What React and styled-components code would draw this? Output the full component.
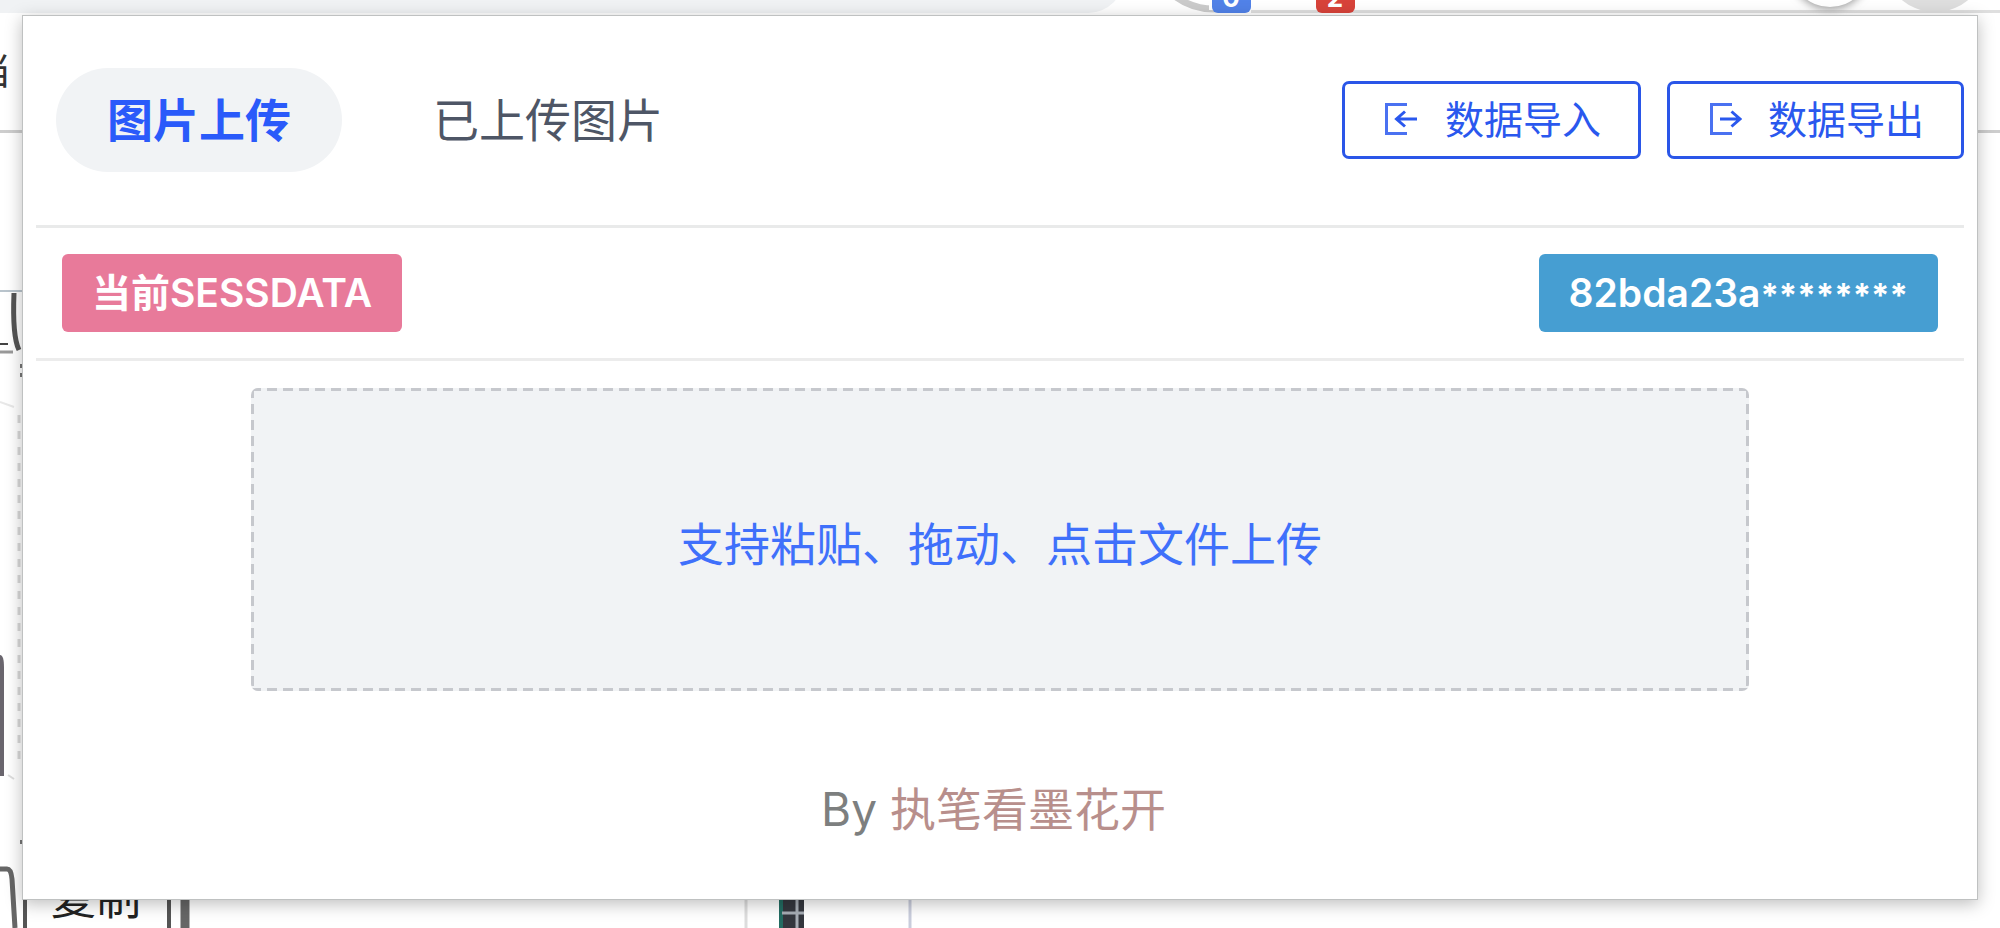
import React, { useState } from "react";
import styled, { createGlobalStyle } from "styled-components";

const GlobalStyle = createGlobalStyle`
  *, *::before, *::after { box-sizing: border-box; }
  body {
    margin: 0;
    background: #fff;
    font-family: Inter, "Noto Sans CJK SC", sans-serif;
  }
  button { font-family: inherit; cursor: pointer; }
`;

const Page = styled.div`
  position: relative;
  min-height: 100vh;
  overflow: hidden;
  padding: 15px 22px 28px;
`;

const Backdrop = styled.svg`
  position: absolute;
  inset: 0;
  width: 100%;
  height: 100%;
`;

const Popup = styled.main`
  position: relative;
  padding: 0 13px 54px;
  border: 1px solid #bfc1c1;
  background: #fff;
  box-shadow: 0 4px 16px rgba(0, 0, 0, 0.26);
`;

const Header = styled.header`
  display: flex;
  align-items: center;
  justify-content: space-between;
  padding: 52px 0 53px 20px;
  border-bottom: 3px solid #e9eaea;
`;

const Tabs = styled.nav`
  display: flex;
  gap: 40px;
`;

const Tab = styled.button`
  height: 104px;
  padding: 0 51px;
  border: 0;
  border-radius: 52px;
  background: ${(p) => (p.$active ? "#f1f3f5" : "transparent")};
  color: ${(p) => (p.$active ? "#2a5afa" : "#4e5666")};
  font-size: 46px;
  font-weight: ${(p) => (p.$active ? 700 : 400)};
  line-height: 72px;
`;

const Actions = styled.div`
  display: flex;
  gap: 26px;
`;

const ActionButton = styled.button`
  display: flex;
  align-items: center;
  height: 78px;
  padding: 0 37px 0 39px;
  border: 3px solid #2a56e8;
  border-radius: 7px;
  background: #fff;
  color: #2a58ee;
  font-size: 39px;
  line-height: 60px;

  svg {
    display: block;
    margin-right: 26px;
  }
`;

const SessionRow = styled.section`
  display: flex;
  align-items: center;
  justify-content: space-between;
  padding: 26px;
  border-bottom: 3px solid #ececec;
`;

const Tag = styled.span`
  height: 78px;
  padding: 0 30px;
  border-radius: 6px;
  background: ${(p) => p.$color};
  color: #fff;
  font-size: 39px;
  font-weight: 600;
  line-height: 78px;
`;

const Mask = styled.span`
  font-size: 33px;
  font-weight: 700;
  line-height: 1;
`;

const dashX = "repeating-linear-gradient(90deg, #c6c8cd 0 10px, transparent 10px 16px)";
const dashY = "repeating-linear-gradient(180deg, #c6c8cd 0 10px, transparent 10px 16px)";

const UploadZone = styled.button`
  display: block;
  width: calc(100% - 430px);
  height: 303px;
  margin: 27px auto 82px;
  padding: 8px 0 0;
  border: 0;
  border-radius: 7px;
  background:
    ${dashX} top / 100% 3px no-repeat,
    ${dashX} bottom / 100% 3px no-repeat,
    ${dashY} left / 3px 100% no-repeat,
    ${dashY} right / 3px 100% no-repeat,
    #f1f3f5;
  color: #3f70fb;
  font-size: 46px;
  line-height: 72px;
`;

const Footer = styled.footer`
  padding-right: 13px;
  color: #7d7f7f;
  font-size: 46px;
  line-height: 72px;
  text-align: center;
`;

const AuthorLink = styled.a`
  color: #b88f8c;
  text-decoration: none;
`;

function ImportIcon() {
  return (
    <svg width="35" height="34" viewBox="0 0 35 34" fill="none" stroke="currentColor" strokeWidth="3" aria-hidden="true">
      <path d="M23 1.500H2.500V30.500H23" strokeOpacity="0.85" />
      <path d="M33 16H12M21 8.500L12.500 16L21 23.500" />
    </svg>
  );
}

function ExportIcon() {
  return (
    <svg width="33" height="34" viewBox="0 0 33 34" fill="none" stroke="currentColor" strokeWidth="3" aria-hidden="true">
      <path d="M23 1.500H2.500V30.500H23" strokeOpacity="0.85" />
      <path d="M11 16H31M22.500 8.500L31 16L22.500 23.500" />
    </svg>
  );
}

function BrowserBackdrop() {
  return (
    <Backdrop aria-hidden="true">
      <defs>
        <filter id="soft" x="-30%" y="-30%" width="160%" height="160%">
          <feGaussianBlur stdDeviation="4" />
        </filter>
      </defs>
      <rect x="1251" y="10" width="100%" height="3" fill="#dfdfdf" />
      <rect x="-60" y="-60" width="1184" height="73" rx="36" fill="#f0f2f4" />
      <circle cx="1214" cy="-56" r="65" fill="none" stroke="#cbcbcb" strokeWidth="7" />
      <rect x="1209" y="-20" width="60" height="30" fill="#fff" />
      <rect x="1212" y="-20" width="39" height="33" rx="6" fill="#5182e8" />
      <rect x="1316" y="-20" width="39" height="33" rx="6" fill="#d8433a" />
      <g fill="#fff" fontSize="26" fontWeight="700" textAnchor="middle">
        <text x="1231" y="7">0</text>
        <text x="1335" y="7">2</text>
      </g>
      <circle cx="1830" cy="-31" r="40" fill="#999" filter="url(#soft)" />
      <circle cx="1830" cy="-33" r="40" fill="#fff" />
      <circle cx="1935" cy="-40" r="52" fill="#dedede" />

      <text x="-26" y="85" fontSize="37" fill="#333">当</text>
      <rect x="0" y="130" width="100%" height="3" fill="#cdcdcd" />
      <rect x="0" y="290" width="22" height="2" fill="#b9c4cc" />
      <path d="M14 293C13 318 14 340 19 350" fill="none" stroke="#555" strokeWidth="5" />
      <path d="M0 344H8" stroke="#444" strokeWidth="2" />
      <path d="M0 352H13" stroke="#999" strokeWidth="3" />
      <path d="M21 364v4M21 373v4M21 840v4" stroke="#777" strokeWidth="2" />
      <path d="M0 402L14 407" stroke="#e8e8e8" strokeWidth="2" />
      <path d="M19 415V765" stroke="#d9d9d9" strokeWidth="3" strokeDasharray="8 8" />
      <path d="M0 655C3 655 4 660 4 668V776H0Z" fill="#69656d" />
      <path d="M8 775L14 779" stroke="#ddd" strokeWidth="2" />
      <path d="M0 869H7Q11 869 12 879L15 928" fill="none" stroke="#666" strokeWidth="5" />
      <path d="M25 898V928" stroke="#555" strokeWidth="4" />
      <text x="51" y="915" fontSize="45" fill="#222">复制</text>
      <path d="M169 898V928" stroke="#555" strokeWidth="4" />
      <path d="M185 898V928" stroke="#666" strokeWidth="9" />
      <path d="M746 898V928" stroke="#ddd" strokeWidth="3" />
      <rect x="779" y="898" width="25" height="30" fill="#34373e" />
      <path d="M781 898V928" stroke="#236c62" strokeWidth="4" />
      <path d="M797 898V928M782 913H804" stroke="#a7adb5" strokeWidth="3" />
      <path d="M910 898V928" stroke="#c9cddc" strokeWidth="3" />
    </Backdrop>
  );
}

export default function App() {
  const [tab, setTab] = useState("upload");

  return (
    <Page>
      <GlobalStyle />
      <BrowserBackdrop />
      <Popup>
        <Header>
          <Tabs>
            <Tab type="button" $active={tab === "upload"} onClick={() => setTab("upload")}>
              图片上传
            </Tab>
            <Tab type="button" $active={tab === "uploaded"} onClick={() => setTab("uploaded")}>
              已上传图片
            </Tab>
          </Tabs>
          <Actions>
            <ActionButton type="button">
              <ImportIcon />
              数据导入
            </ActionButton>
            <ActionButton type="button">
              <ExportIcon />
              数据导出
            </ActionButton>
          </Actions>
        </Header>
        <SessionRow>
          <Tag $color="#e87a9a">当前SESSDATA</Tag>
          <Tag $color="#469ed2">
            82bda23a<Mask>********</Mask>
          </Tag>
        </SessionRow>
        <UploadZone type="button">支持粘贴、拖动、点击文件上传</UploadZone>
        <Footer>
          By <AuthorLink href="#author">执笔看墨花开</AuthorLink>
        </Footer>
      </Popup>
    </Page>
  );
}
